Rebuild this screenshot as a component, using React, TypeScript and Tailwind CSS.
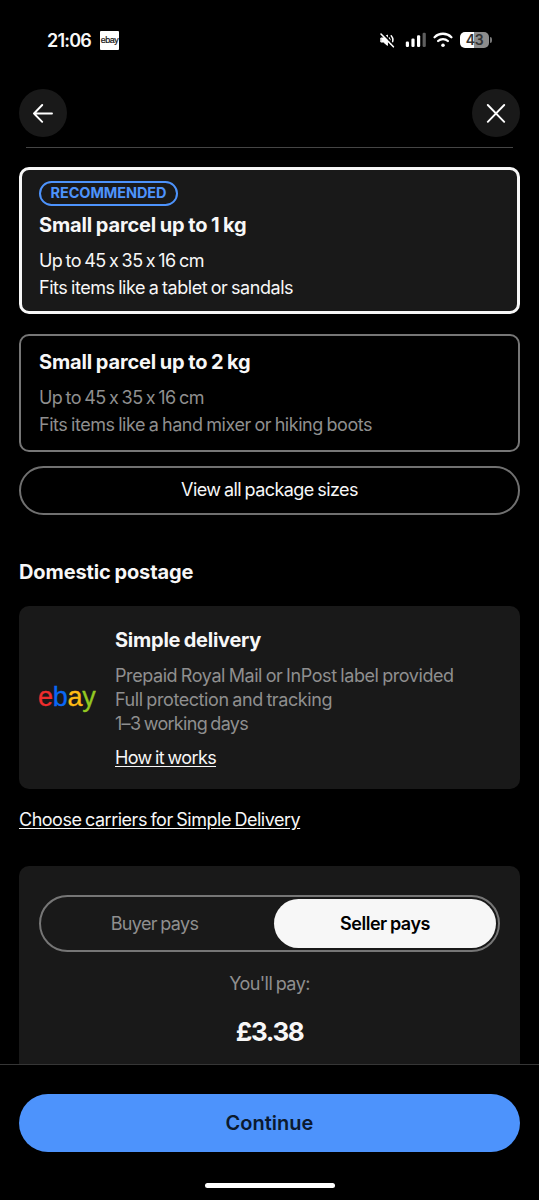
import { useState } from "react";

type Payer = "buyer" | "seller";

const parcels = [
  { id: "1kg", title: "Small parcel up to 1 kg", size: "Up to 45 x 35 x 16 cm", hint: "Fits items like a tablet or sandals", recommended: true },
  { id: "2kg", title: "Small parcel up to 2 kg", size: "Up to 45 x 35 x 16 cm", hint: "Fits items like a hand mixer or hiking boots", recommended: false },
];

function StatusBar() {
  return (
    <div className="flex h-20 shrink-0 items-center px-[47px]">
      <span className="w-[53px] pt-[2px] text-[18px] font-semibold leading-none tracking-[-0.8px]">21:06</span>
      <svg width="19" height="19" viewBox="0 0 19 19">
        <rect width="19" height="19" rx="1" fill="#fff" />
        <text x="0.8" y="11.8" fontSize="8.5" fontFamily="Liberation Sans, sans-serif" fill="#111" stroke="#111" strokeWidth="0.2" textLength="17.4" lengthAdjust="spacingAndGlyphs">ebay</text>
      </svg>
      <div className="ml-auto flex items-center">
        {/* Muted */}
        <svg width="18" height="18" viewBox="0 0 18 18" className="mr-[9px]" fill="none" stroke="#fff" strokeLinecap="round">
          <path d="M3.2 7h2.2L9.4 4v10.4L5.4 11H3.2z" fill="#fff" strokeWidth="1" strokeLinejoin="round" />
          <path d="M11.2 7a3.4 3.4 0 0 1 0 4M13.2 4.8a6.6 6.6 0 0 1 0 8.4" strokeWidth="1.5" />
          <path d="M4.2 2l12 12.4" stroke="#000" strokeWidth="1.8" />
          <path d="M3 3l12.4 12.8" strokeWidth="1.6" />
        </svg>
        {/* Signal */}
        <svg width="21" height="16" viewBox="0 0 21 16" className="mr-[7px]" fill="#fff">
          <rect x="0.8" y="9.5" width="3.2" height="5.5" rx="1.2" />
          <rect x="6.4" y="6.5" width="3.2" height="8.5" rx="1.2" />
          <rect x="12" y="3.2" width="3.2" height="11.8" rx="1.2" />
          <rect x="17.6" y="0.8" width="3.2" height="14.2" rx="1.2" fill="#5e5e5e" />
        </svg>
        {/* Wifi */}
        <svg width="20" height="16" viewBox="0 0 20 16" className="mr-[7px]" fill="none" stroke="#fff" strokeWidth="2.3" strokeLinecap="round">
          <path d="M1.6 5.2a12 12 0 0 1 16.8 0" />
          <path d="M5.1 9a7.2 7.2 0 0 1 9.8 0" />
          <circle cx="10" cy="13.2" r="1.8" fill="#fff" stroke="none" />
        </svg>
        {/* Battery */}
        <div className="flex h-4 w-[29px] items-center justify-center rounded-[5px] bg-linear-to-r from-white from-48% to-[#8c8c8c] to-48% text-[14px] font-semibold leading-none tracking-[-0.4px] text-[#333]">43</div>
        <div className="ml-px h-[6px] w-[2px] rounded-r-full bg-[#777]" />
      </div>
    </div>
  );
}

function Header() {
  return (
    <div className="flex h-[68px] shrink-0 flex-col pt-[9px]">
      <div className="flex justify-between px-[19px]">
        <button aria-label="Back" className="flex size-12 items-center justify-center rounded-full bg-[#191919]">
          <svg width="22" height="20" viewBox="0 0 22 20" fill="none" stroke="#fff" strokeWidth="1.9" strokeLinecap="round" strokeLinejoin="round">
            <path d="M20 10.5H2M10.2 2L2 10.5l8.2 8.3" />
          </svg>
        </button>
        <button aria-label="Close" className="flex size-12 items-center justify-center rounded-full bg-[#191919]">
          <svg width="20" height="20" viewBox="0 0 20 20" fill="none" stroke="#fff" strokeWidth="1.9" strokeLinecap="round">
            <path d="M1.8 2l16.4 16.8M18.2 2L1.8 18.8" />
          </svg>
        </button>
      </div>
      <div className="mx-[26px] mt-[10px] h-px shrink-0 bg-[#454545]" />
    </div>
  );
}

function EbayLogo() {
  return (
    <div className="whitespace-nowrap pb-px font-['Liberation_Sans',sans-serif] text-[27px] leading-8 tracking-[-0.3px]" aria-label="eBay">
      <span className="text-[#f02d2d] [-webkit-text-stroke:0.3px_#f02d2d]">e</span>
      <span className="text-[#0968f6] [-webkit-text-stroke:0.3px_#0968f6]">b</span>
      <span className="text-[#ffbd14] [-webkit-text-stroke:0.3px_#ffbd14]">a</span>
      <span className="text-[#92c821] [-webkit-text-stroke:0.3px_#92c821]">y</span>
    </div>
  );
}

export default function App() {
  const [selected, setSelected] = useState("1kg");
  const [payer, setPayer] = useState<Payer>("seller");

  return (
    <div className="flex h-[1200px] w-[539px] flex-col overflow-hidden bg-black font-['Inter',sans-serif] text-[18px] tracking-[-0.45px] text-[#f7f7f7] [word-spacing:-1px]">
      <StatusBar />
      <Header />

      <main className="flex min-h-0 flex-1 flex-col overflow-hidden px-[19px] pt-[19px]">
        {/* Package sizes */}
        {parcels.map(p => (
          <button key={p.id} onClick={() => setSelected(p.id)}
            className={`flex shrink-0 flex-col items-start whitespace-nowrap rounded-[10px] text-left [word-spacing:-1px] ${
              selected === p.id ? "border-[3px] border-[#f7f7f7] bg-[#191919] px-[17px]" : "border-2 border-[#767676] px-[18px] text-[#8f8f8f]"
            } ${p.recommended ? "mb-5 h-[147px] pt-[11px]" : "mb-[14px] h-[118px] pt-[7px]"}`}>
            {p.recommended && (
              <span className="flex h-[25px] w-[139px] items-center justify-center rounded-full border-2 border-[#4d93fc] text-[14.5px] font-bold leading-none tracking-[-0.1px] text-[#4d93fc]">RECOMMENDED</span>
            )}
            <span className="mt-[5px] text-[20px] font-bold leading-[28px] tracking-[-0.13px] text-[#f7f7f7]">{p.title}</span>
            <span className="mt-2 leading-[27px] tracking-[-0.53px] [word-spacing:-1.3px]">{p.size}</span>
            <span className="leading-[27px]">{p.hint}</span>
          </button>
        ))}
        <button className="h-[49px] shrink-0 rounded-full border-2 border-[#707070] pb-px leading-none tracking-[-0.57px] [word-spacing:-1px]">View all package sizes</button>

        {/* Domestic postage */}
        <h2 className="mt-[43px] text-[20px] font-bold leading-[28px] tracking-[-0.1px]">Domestic postage</h2>
        <section className="mt-5 flex h-[183px] shrink-0 items-center rounded-[10px] bg-[#191919] pl-[19px]">
          <div className="w-[77px] shrink-0">
            <EbayLogo />
          </div>
          <div className="flex flex-col items-start whitespace-nowrap">
            <h3 className="text-[20px] font-bold leading-[28px] tracking-[-0.25px]">Simple delivery</h3>
            <p className="mt-[10px] leading-6 tracking-[-0.42px] text-[#8f8f8f]">Prepaid Royal Mail or InPost label provided</p>
            <p className="leading-6 tracking-[-0.42px] text-[#8f8f8f]">Full protection and tracking</p>
            <p className="leading-6 tracking-[-0.7px] text-[#8f8f8f]">1–3 working days</p>
            <a href="#" className="mt-[10px] leading-6 tracking-[-0.63px] underline underline-offset-2">How it works</a>
          </div>
        </section>
        <a href="#" className="mt-[19px] self-start leading-6 tracking-[-0.49px] underline underline-offset-2">Choose carriers for Simple Delivery</a>

        {/* Who pays */}
        <section className="mt-[34px] flex h-[240px] shrink-0 flex-col items-center rounded-t-[10px] bg-[#191919] px-[19px] pt-[29px]">
          <div className="flex h-[57px] w-[461px] items-center rounded-full border-2 border-[#767676] p-[2px]">
            {(["buyer", "seller"] as const).map(k => (
              <button key={k} onClick={() => setPayer(k)}
                className={`h-[49px] rounded-full [word-spacing:-1px] ${k === "buyer" ? "mr-2 w-[223px]" : "w-[222px]"} ${
                  payer === k ? "bg-[#f7f7f7] font-semibold tracking-[-0.45px] text-black" : "tracking-[-0.65px] text-[#8f8f8f]"
                }`}>
                {k === "buyer" ? "Buyer pays" : "Seller pays"}
              </button>
            ))}
          </div>
          <p className="mt-[19px] leading-[26px] tracking-[-0.55px] text-[#8f8f8f]">You'll pay:</p>
          <p className="mt-[19px] text-[26px] font-bold leading-8 tracking-[-1.4px]">£3.38</p>
        </section>
      </main>

      <footer className="flex h-[136px] shrink-0 flex-col items-center border-t border-[#363636] px-[19px] pt-[29px]">
        <button className="h-[58px] w-full rounded-full bg-[#4d93fc] text-[20px] font-semibold tracking-normal text-[#0b1a2e]">Continue</button>
        <div className="mt-[31px] h-[5px] w-[130px] rounded-full bg-white" />
      </footer>
    </div>
  );
}
